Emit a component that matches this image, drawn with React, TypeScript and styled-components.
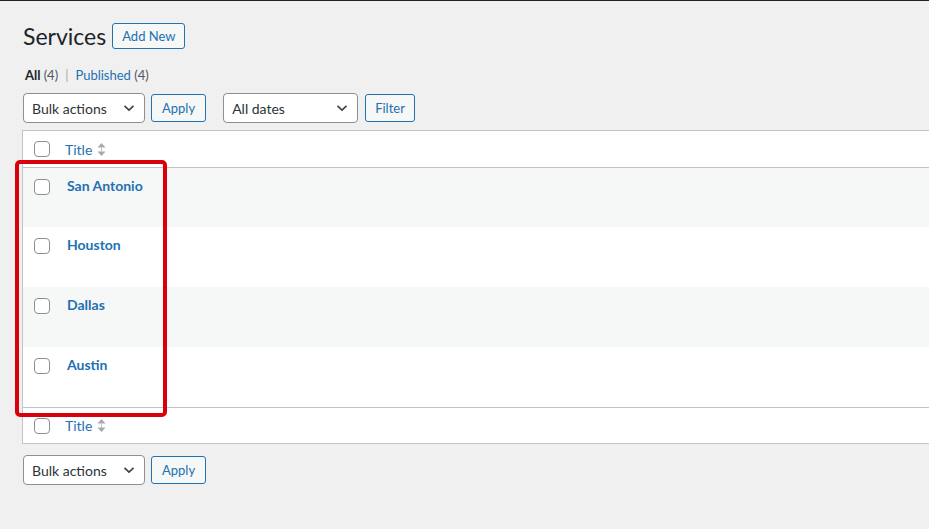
import styled, { createGlobalStyle } from "styled-components";

const GlobalStyle = createGlobalStyle`
  html, body {
    margin: 0;
    padding: 0;
    background: #f0f0f1;
    font-family: Lato, "Liberation Sans", Arial, sans-serif;
    color: #2c3338;
  }
  body {
    overflow: hidden;
  }
`;

const TopBar = styled.div`
  height: 1px;
  background: #1d2327;
`;

const Wrap = styled.div`
  padding: 20px 0 0 22px;
`;

const HeadingRow = styled.div`
  display: flex;
  align-items: center;
  gap: 6px;
  height: 30px;
`;

const Title = styled.h1`
  margin: 0 0 0 1px;
  font-size: 23px;
  font-weight: 400;
  line-height: 30px;
  color: #1d2327;
`;

const OutlineButton = styled.button<{ $h?: number; $px?: number }>`
  height: ${(p) => p.$h ?? 28}px;
  padding: 0 ${(p) => p.$px ?? 10}px;
  border: 1px solid #2271b1;
  border-radius: 3px;
  background: #f6f7f7;
  color: #2271b1;
  font-family: inherit;
  font-size: 13px;
  line-height: 1;
  cursor: pointer;
`;

const SubSub = styled.ul`
  display: flex;
  align-items: center;
  gap: 7px;
  list-style: none;
  margin: 15px 0 0 3px;
  padding: 0;
  height: 18px;
  font-size: 13px;
`;

const FilterItem = styled.li<{ $current?: boolean }>`
  color: ${(p) => (p.$current ? "#1d2327" : "#2271b1")};
  font-weight: ${(p) => (p.$current ? 700 : 400)};
`;

const Count = styled.span`
  color: #50575e;
  font-weight: 400;
`;

const Sep = styled.li`
  color: #a7aaad;
`;

const TableNav = styled.div<{ $top?: boolean }>`
  display: flex;
  align-items: center;
  gap: 6px;
  margin: ${(p) => (p.$top ? "9px 0 7px 1px" : "11px 0 0 1px")};
  height: 30px;
`;

const Group = styled.div<{ $gap?: number }>`
  display: flex;
  align-items: center;
  gap: ${(p) => p.$gap ?? 6}px;
  margin-right: 11px;
`;

const SelectBox = styled.div<{ $w: number }>`
  display: flex;
  align-items: center;
  justify-content: space-between;
  box-sizing: border-box;
  width: ${(p) => p.$w}px;
  height: 30px;
  padding: 0 9px 0 8px;
  border: 1px solid #8c8f94;
  border-radius: 4px;
  background: #fff;
  font-size: 14px;
  color: #2c3338;
`;

const Chevron = () => (
  <svg width="12" height="8" viewBox="0 0 12 8">
    <path d="M1.5 1.8 L6 6 L10.5 1.8" fill="none" stroke="#3c434a" strokeWidth="1.7" />
  </svg>
);

const TableWrap = styled.div`
  position: relative;
`;

const Table = styled.div`
  border: 1px solid #c3c4c7;
  border-right: none;
  background: #fff;
`;

const HeadRow = styled.div<{ $foot?: boolean }>`
  display: flex;
  align-items: center;
  height: ${(p) => (p.$foot ? 35 : 36)}px;
  padding-left: 11px;
  ${(p) => (p.$foot ? "border-top: 1px solid #c3c4c7;" : "border-bottom: 1px solid #c3c4c7;")}
`;

const Row = styled.div<{ $alt?: boolean; $first?: boolean }>`
  display: flex;
  align-items: flex-start;
  height: ${(p) => (p.$first ? 59 : 60)}px;
  padding: 11px 0 0 11px;
  box-sizing: border-box;
  background: ${(p) => (p.$alt ? "#f6f7f7" : "#fff")};
`;

const Check = styled.span`
  display: inline-block;
  flex: none;
  width: 14px;
  height: 14px;
  border: 1px solid #8c8f94;
  border-radius: 4px;
  background: #fff;
`;

const ColLink = styled.span`
  display: flex;
  align-items: center;
  gap: 5px;
  margin-left: 15px;
  font-size: 14px;
  color: #2271b1;
`;

const RowTitle = styled.a`
  margin: -2px 0 0 17px;
  font-size: 14px;
  font-weight: 700;
  color: #2271b1;
  text-decoration: none;
`;

const Callout = styled.div`
  position: absolute;
  left: -7px;
  top: 30px;
  width: 144px;
  height: 249px;
  border: 4px solid #d9000c;
  border-radius: 5px;
  pointer-events: none;
`;

const SortIcon = () => (
  <svg width="9" height="15" viewBox="0 0 9 15">
    <path d="M4.5 1 L8.5 5.5 L0.5 5.5 Z M4.5 14 L8.5 9.5 L0.5 9.5 Z" fill="#a7aaad" />
    <path d="M4.5 5 V10" stroke="#c3c4c7" strokeWidth="1" />
  </svg>
);

const rows = ["San Antonio", "Houston", "Dallas", "Austin"];

export default function App() {
  return (
    <>
      <GlobalStyle />
      <TopBar />
      <Wrap>
        <HeadingRow>
          <Title>Services</Title>
          <OutlineButton $h={26} $px={9}>
            Add New
          </OutlineButton>
        </HeadingRow>
        <SubSub>
          <FilterItem $current>
            All <Count>(4)</Count>
          </FilterItem>
          <Sep>|</Sep>
          <FilterItem>
            Published <Count>(4)</Count>
          </FilterItem>
        </SubSub>
        <TableNav $top>
          <Group>
            <SelectBox $w={122}>
              <span>Bulk actions</span>
              <Chevron />
            </SelectBox>
            <OutlineButton>Apply</OutlineButton>
          </Group>
          <Group $gap={7}>
            <SelectBox $w={135}>
              <span>All dates</span>
              <Chevron />
            </SelectBox>
            <OutlineButton $px={9}>Filter</OutlineButton>
          </Group>
        </TableNav>
        <TableWrap>
          <Table>
            <HeadRow>
              <Check />
              <ColLink>
                Title <SortIcon />
              </ColLink>
            </HeadRow>
            {rows.map((r, i) => (
              <Row key={r} $alt={i % 2 === 0} $first={i === 0}>
                <Check />
                <RowTitle href="#">{r}</RowTitle>
              </Row>
            ))}
            <HeadRow $foot>
              <Check />
              <ColLink>
                Title <SortIcon />
              </ColLink>
            </HeadRow>
          </Table>
          <Callout />
        </TableWrap>
        <TableNav>
          <Group>
            <SelectBox $w={122}>
              <span>Bulk actions</span>
              <Chevron />
            </SelectBox>
            <OutlineButton>Apply</OutlineButton>
          </Group>
        </TableNav>
      </Wrap>
    </>
  );
}
